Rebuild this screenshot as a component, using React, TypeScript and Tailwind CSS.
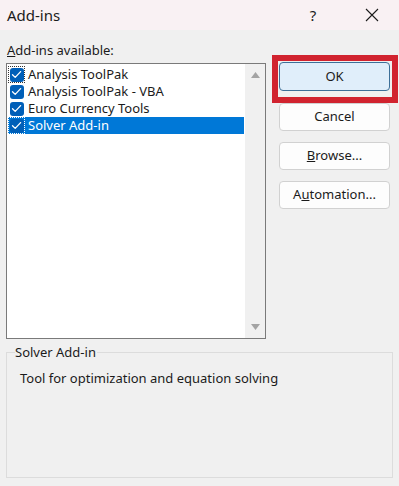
import React from 'react';

const items = [
  { label: 'Analysis ToolPak', focus: true },
  { label: 'Analysis ToolPak - VBA' },
  { label: 'Euro Currency Tools' },
  { label: 'Solver Add-in', selected: true },
];

function Check() {
  return (
    <svg width="11" height="11" viewBox="0 0 11 11" fill="none">
      <path d="M1.5 5.8 L4.2 8.4 L9.6 2.6" stroke="white" strokeWidth="1.3" strokeLinecap="round" strokeLinejoin="round" />
    </svg>
  );
}

function Btn({ children, primary }: { children: React.ReactNode; primary?: boolean }) {
  return (
    <button
      className={
        primary
          ? 'w-[111px] h-[29px] rounded-[4px] border border-[#3d6f98] bg-[#e0eefa] text-[13px] text-[#1b1b1b]'
          : 'w-[111px] h-[28px] rounded-[4px] border border-[#d1d1d1] bg-[#fdfdfd] text-[13px] text-[#1b1b1b]'
      }
    >
      {children}
    </button>
  );
}

export default function App() {
  return (
    <div className="w-[399px] h-[486px] bg-[#f0f0f0] flex flex-col" style={{ fontFamily: '"Noto Sans", "Open Sans", sans-serif' }}>
      <div className="h-[30px] bg-[#f9f1f3] flex items-center pl-[7px] shrink-0">
        <span className="text-[15px] text-[#1b1b1b] flex-1">Add-ins</span>
        <span className="text-[15px] text-[#1b1b1b] w-[20px] text-center mr-[42px]">?</span>
        <svg width="14" height="14" viewBox="0 0 14 14" className="mr-[20px]">
          <path d="M1 1 L13 13 M13 1 L1 13" stroke="#1b1b1b" strokeWidth="1.1" />
        </svg>
      </div>

      <div className="flex px-[6px] pt-[12px]">
        <div className="flex flex-col">
          <div className="text-[13px] leading-[16px] text-[#1b1b1b] pl-[1px] mb-[5px]">
            <span className="underline">A</span>dd-ins available:
          </div>
          <div className="w-[260px] h-[276px] border border-[#7a7a7a] bg-white flex">
            <div className="flex-1 pt-[2px] pl-[1px]">
              {items.map((it) => (
                <div
                  key={it.label}
                  className={
                    'h-[17px] flex items-center ' +
                    (it.selected ? 'bg-[#0078d7] text-white w-[236px]' : 'text-[#1b1b1b]')
                  }
                >
                  <div
                    className={
                      'w-[17px] h-[17px] flex items-center justify-center ' +
                      (it.focus ? 'border border-dotted border-[#333]' : it.selected ? 'border border-dotted border-white' : '')
                    }
                  >
                    <div className="w-[14px] h-[14px] rounded-[3px] bg-[#005fb8] flex items-center justify-center">
                      <Check />
                    </div>
                  </div>
                  <span className="text-[13px] leading-[17px] ml-[3px] whitespace-nowrap">{it.label}</span>
                </div>
              ))}
            </div>
            <div className="w-[20px] bg-[#f0f0f0] flex flex-col justify-between items-center py-[8px]">
              <svg width="9" height="6" viewBox="0 0 9 6">
                <path d="M0 6 L4.5 0 L9 6 Z" fill="#a3a3a3" />
              </svg>
              <svg width="9" height="6" viewBox="0 0 9 6">
                <path d="M0 0 L9 0 L4.5 6 Z" fill="#a3a3a3" />
              </svg>
            </div>
          </div>
        </div>

        <div className="flex flex-col ml-[6px] pt-[13px]">
          <div className="border-[6px] border-[#d1232f] p-[1px] w-[126px] h-[48px]">
            <Btn primary>OK</Btn>
          </div>
          <div className="flex flex-col gap-[11px] pl-[7px]">
            <Btn>Cancel</Btn>
            <Btn>
              <span className="underline">B</span>rowse...
            </Btn>
            <Btn>
              A<span className="underline">u</span>tomation...
            </Btn>
          </div>
        </div>
      </div>

      <div className="mx-[6px] mt-[13px] relative border border-[#dcdcdc] h-[126px]">
        <span className="absolute -top-[10px] left-[8px] bg-[#f0f0f0] text-[13px] leading-[18px] text-[#1b1b1b] pr-[1px]">
          Solver Add-in
        </span>
        <div className="text-[13px] text-[#1b1b1b] pl-[13px] pt-[16px]">Tool for optimization and equation solving</div>
      </div>
    </div>
  );
}
